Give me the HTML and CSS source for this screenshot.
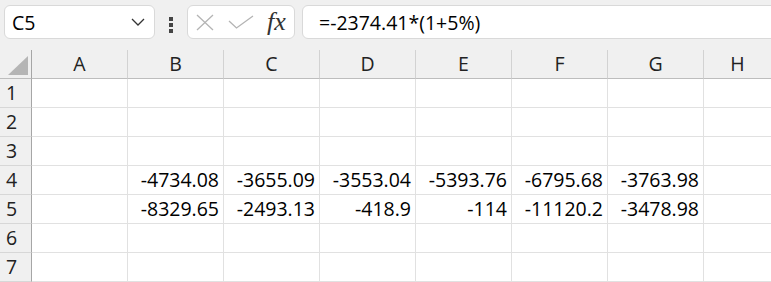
FILE: index.html
```html
<!DOCTYPE html>
<html lang="en">
<head>
    <meta charset="UTF-8">
    <title>Sheet</title>
    <link rel="stylesheet" href="styles.css">
</head>
<body>
    <div class="formula-bar">
        <div class="name-box">
            <span>C5</span>
            <svg class="chevron" width="14" height="8" viewBox="0 0 14 8">
                <path d="M1 1 L7 7 L13 1" fill="none" stroke="#333" stroke-width="1.3"/>
            </svg>
        </div>
        <div class="grip">
            <i></i><i></i><i></i>
        </div>
        <div class="fx-box">
            <svg width="18" height="17" viewBox="0 0 18 17">
                <path d="M1 1 L17 16 M17 1 L1 16" stroke="#b4b4b4" stroke-width="1.3" fill="none"/>
            </svg>
            <svg width="26" height="14" viewBox="0 0 26 14">
                <path d="M1 6 L8.5 13 L25 1" stroke="#b4b4b4" stroke-width="1.3" fill="none"/>
            </svg>
            <span class="fx">fx</span>
        </div>
        <div class="formula-input">=-2374.41*(1+5%)</div>
    </div>

    <div class="sheet">
        <div class="corner"><span class="tri"></span></div>
        <div class="col-head">A</div>
        <div class="col-head">B</div>
        <div class="col-head">C</div>
        <div class="col-head">D</div>
        <div class="col-head">E</div>
        <div class="col-head">F</div>
        <div class="col-head">G</div>
        <div class="col-head last">H</div>

        <div class="row-head">1</div>
        <div class="cell"></div><div class="cell"></div><div class="cell"></div><div class="cell"></div><div class="cell"></div><div class="cell"></div><div class="cell"></div><div class="cell last"></div>

        <div class="row-head">2</div>
        <div class="cell"></div><div class="cell"></div><div class="cell"></div><div class="cell"></div><div class="cell"></div><div class="cell"></div><div class="cell"></div><div class="cell last"></div>

        <div class="row-head">3</div>
        <div class="cell"></div><div class="cell"></div><div class="cell"></div><div class="cell"></div><div class="cell"></div><div class="cell"></div><div class="cell"></div><div class="cell last"></div>

        <div class="row-head">4</div>
        <div class="cell"></div>
        <div class="cell">-4734.08</div>
        <div class="cell">-3655.09</div>
        <div class="cell">-3553.04</div>
        <div class="cell">-5393.76</div>
        <div class="cell">-6795.68</div>
        <div class="cell">-3763.98</div>
        <div class="cell last"></div>

        <div class="row-head">5</div>
        <div class="cell"></div>
        <div class="cell">-8329.65</div>
        <div class="cell">-2493.13</div>
        <div class="cell">-418.9</div>
        <div class="cell">-114</div>
        <div class="cell">-11120.2</div>
        <div class="cell">-3478.98</div>
        <div class="cell last"></div>

        <div class="row-head">6</div>
        <div class="cell"></div><div class="cell"></div><div class="cell"></div><div class="cell"></div><div class="cell"></div><div class="cell"></div><div class="cell"></div><div class="cell last"></div>

        <div class="row-head">7</div>
        <div class="cell"></div><div class="cell"></div><div class="cell"></div><div class="cell"></div><div class="cell"></div><div class="cell"></div><div class="cell"></div><div class="cell last"></div>
    </div>
</body>
</html>
```

FILE: styles.css
```css
body {
    margin: 0;
    background-color: #f0f0f0;
    font-family: "Open Sans", "Noto Sans", sans-serif;
    color: #000;
    overflow: hidden;
}

/* top bar: name box, grip, buttons, formula */
.formula-bar {
    display: flex;
    align-items: flex-start;
    height: 50px;
    padding-top: 5px;
    padding-left: 4px;
    box-sizing: border-box;
}
.name-box {
    width: 151px;
    height: 34px;
    box-sizing: border-box;
    background-color: #fff;
    border: 1px solid #d9d9d9;
    border-radius: 6px;
    display: flex;
    align-items: center;
    justify-content: space-between;
    padding: 0 9px 0 7px;
    font-size: 19.5px;
}
.grip {
    width: 4px;
    margin: 12px 14px 0 14px;
    display: flex;
    flex-direction: column;
    gap: 2.5px;
}
.grip i {
    display: block;
    width: 3.5px;
    height: 3.5px;
    background-color: #444;
}
.fx-box {
    width: 108px;
    height: 34px;
    box-sizing: border-box;
    background-color: #fff;
    border: 1px solid #d9d9d9;
    border-radius: 6px;
    display: flex;
    align-items: center;
    padding-left: 8px;
    gap: 14px;
}
.fx {
    font-family: "Liberation Serif", "DejaVu Serif", serif;
    font-style: italic;
    font-size: 26px;
    color: #333;
    margin-left: -1px;
    line-height: 1;
}
.formula-input {
    flex: 1;
    height: 34px;
    box-sizing: border-box;
    margin-left: 7px;
    margin-right: -20px;
    background-color: #fff;
    border: 1px solid #d9d9d9;
    border-radius: 6px;
    padding-left: 16px;
    display: flex;
    align-items: center;
    font-size: 19.5px;
    white-space: nowrap;
}

/* grid */
.sheet {
    display: grid;
    grid-template-columns: 32px repeat(7, 96px) 1fr;
    grid-template-rows: 29px repeat(7, 29px);
    background-color: #fff;
    font-size: 19.5px;
}
.corner {
    background-color: #f0f0f0;
    border-right: 1px solid #a6a6a6;
    border-bottom: 1px solid #bdbdbd;
    position: relative;
}
.tri {
    position: absolute;
    right: 3px;
    bottom: 3px;
    width: 0;
    height: 0;
    border-left: 20px solid transparent;
    border-bottom: 19px solid #b5b5b5;
}
.col-head {
    background-color: #f0f0f0;
    border-bottom: 1px solid #bdbdbd;
    border-right: 1px solid #d2d2d2;
    display: flex;
    align-items: center;
    justify-content: center;
    color: #222;
    line-height: 1;
}
.col-head.last {
    border-right: none;
}
.row-head {
    background-color: #f0f0f0;
    border-right: 1px solid #a6a6a6;
    border-bottom: 1px solid #d7d7d7;
    display: flex;
    align-items: center;
    padding-left: 6px;
    color: #222;
    line-height: 1;
}
.cell {
    border-right: 1px solid #e1e1e1;
    border-bottom: 1px solid #e1e1e1;
    display: flex;
    align-items: center;
    justify-content: flex-end;
    padding-right: 4px;
    line-height: 1;
    white-space: nowrap;
}
.cell.last {
    border-right: none;
}
```
